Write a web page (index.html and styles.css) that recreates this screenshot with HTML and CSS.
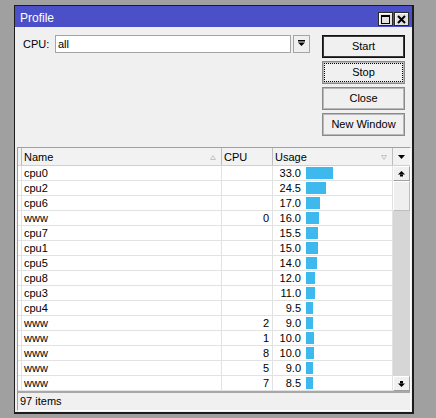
FILE: index.html
```html
<!DOCTYPE html>
<html>
<head>
<meta charset="utf-8">
<title>Profile</title>
<link rel="stylesheet" href="styles.css">
</head>
<body>
<div class="desktop">
  <div class="window">
    <div class="titlebar">
      <span class="title">Profile</span>
      <div class="tbtns">
        <span class="tbtn"><svg width="9" height="9" viewBox="0 0 9 9"><rect x="0.5" y="0.5" width="8" height="8" fill="none" stroke="#000"/><rect x="0" y="0" width="9" height="2" fill="#000"/></svg></span>
        <span class="tbtn"><svg width="9" height="9" viewBox="0 0 9 9"><path d="M1 1L8 8M8 1L1 8" stroke="#000" stroke-width="2"/></svg></span>
      </div>
    </div>
    <div class="body">
      <div class="top">
        <div class="form">
          <span class="label">CPU:</span>
          <div class="input">all</div>
          <div class="ddbtn"><svg width="7" height="6" viewBox="0 0 7 6"><rect x="0" y="0" width="7" height="1.5" fill="#000"/><polygon points="0,2.5 7,2.5 3.5,6" fill="#000"/></svg></div>
        </div>
        <div class="buttons">
          <div class="btn default">Start</div>
          <div class="btn focus"><span class="focusring">Stop</span></div>
          <div class="btn">Close</div>
          <div class="btn">New Window</div>
        </div>
      </div>
      <div class="frame">
        <div class="head">
          <div class="hcell"></div>
          <div class="hcell sort"><span>Name</span><svg width="6" height="5" viewBox="0 0 6 5"><polygon points="3,0.5 5.5,4.5 0.5,4.5" fill="none" stroke="#c4c4c4"/></svg></div>
          <div class="hcell"><span>CPU</span></div>
          <div class="hcell sort"><span>Usage</span><svg width="6" height="5" viewBox="0 0 6 5"><polygon points="0.5,0.5 5.5,0.5 3,4.5" fill="none" stroke="#c4c4c4"/></svg></div>
          <div class="hcell scrollhead"><svg width="7" height="4" viewBox="0 0 7 4"><polygon points="0,0 7,0 3.5,4" fill="#000"/></svg></div>
        </div>
        <div class="list">
          <div class="rows">
            <div class="row"><div class="c0"></div><div class="cname">cpu0</div><div class="ccpu"></div><div class="cuse"><span class="num">33.0</span><span class="bar" style="width:27px"></span></div></div>
            <div class="row"><div class="c0"></div><div class="cname">cpu2</div><div class="ccpu"></div><div class="cuse"><span class="num">24.5</span><span class="bar" style="width:20px"></span></div></div>
            <div class="row"><div class="c0"></div><div class="cname">cpu6</div><div class="ccpu"></div><div class="cuse"><span class="num">17.0</span><span class="bar" style="width:14px"></span></div></div>
            <div class="row"><div class="c0"></div><div class="cname">www</div><div class="ccpu">0</div><div class="cuse"><span class="num">16.0</span><span class="bar" style="width:13px"></span></div></div>
            <div class="row"><div class="c0"></div><div class="cname">cpu7</div><div class="ccpu"></div><div class="cuse"><span class="num">15.5</span><span class="bar" style="width:12px"></span></div></div>
            <div class="row"><div class="c0"></div><div class="cname">cpu1</div><div class="ccpu"></div><div class="cuse"><span class="num">15.0</span><span class="bar" style="width:12px"></span></div></div>
            <div class="row"><div class="c0"></div><div class="cname">cpu5</div><div class="ccpu"></div><div class="cuse"><span class="num">14.0</span><span class="bar" style="width:11px"></span></div></div>
            <div class="row"><div class="c0"></div><div class="cname">cpu8</div><div class="ccpu"></div><div class="cuse"><span class="num">12.0</span><span class="bar" style="width:9px"></span></div></div>
            <div class="row"><div class="c0"></div><div class="cname">cpu3</div><div class="ccpu"></div><div class="cuse"><span class="num">11.0</span><span class="bar" style="width:9px"></span></div></div>
            <div class="row"><div class="c0"></div><div class="cname">cpu4</div><div class="ccpu"></div><div class="cuse"><span class="num">9.5</span><span class="bar" style="width:7px"></span></div></div>
            <div class="row"><div class="c0"></div><div class="cname">www</div><div class="ccpu">2</div><div class="cuse"><span class="num">9.0</span><span class="bar" style="width:7px"></span></div></div>
            <div class="row"><div class="c0"></div><div class="cname">www</div><div class="ccpu">1</div><div class="cuse"><span class="num">10.0</span><span class="bar" style="width:8px"></span></div></div>
            <div class="row"><div class="c0"></div><div class="cname">www</div><div class="ccpu">8</div><div class="cuse"><span class="num">10.0</span><span class="bar" style="width:8px"></span></div></div>
            <div class="row"><div class="c0"></div><div class="cname">www</div><div class="ccpu">5</div><div class="cuse"><span class="num">9.0</span><span class="bar" style="width:7px"></span></div></div>
            <div class="row"><div class="c0"></div><div class="cname">www</div><div class="ccpu">7</div><div class="cuse"><span class="num">8.5</span><span class="bar" style="width:7px"></span></div></div>
          </div>
          <div class="vscroll">
            <div class="sbtn"><svg width="7" height="6" viewBox="0 0 7 6"><polygon points="3.5,0 7,3.5 0,3.5" fill="#000"/><rect x="2" y="3.5" width="3" height="2" fill="#000"/></svg></div>
            <div class="thumb"></div>
            <div class="track"></div>
            <div class="sbtn"><svg width="7" height="6" viewBox="0 0 7 6"><rect x="2" y="0" width="3" height="2.5" fill="#000"/><polygon points="0,2.5 7,2.5 3.5,6" fill="#000"/></svg></div>
          </div>
        </div>
        <div class="status">97 items</div>
      </div>
    </div>
  </div>
</div>
</body>
</html>
```

FILE: styles.css
```css
html, body {
  margin: 0;
  padding: 0;
}
body {
  background: #a0a0a0;
  font-family: "Liberation Sans", Arial, sans-serif;
  font-size: 11px;
  color: #000;
}
.desktop {
  padding: 5px 0 0 14px;
  height: 418px;
  box-sizing: border-box;
}
.window {
  width: 400px;
  height: 409px;
  box-sizing: border-box;
  border-style: solid;
  border-color: #1c1c1c;
  border-width: 1px 2px 2px 1px;
  background: #f0f0f0;
  display: flex;
  flex-direction: column;
}
.titlebar {
  height: 21px;
  flex: none;
  background: #4b50c8;
  display: flex;
  justify-content: space-between;
  align-items: flex-start;
  padding: 0 3px 0 5px;
  box-sizing: border-box;
}
.title {
  color: #fff;
  font-family: "Liberation Sans Narrow", "Liberation Sans", Arial, sans-serif;
  font-size: 12px;
  line-height: 17px;
  padding-top: 4px;
}
.tbtns {
  display: flex;
  gap: 1px;
  margin-top: 6px;
}
.tbtn {
  width: 15px;
  height: 14px;
  box-sizing: border-box;
  border: 1px solid #2a2a2a;
  background: #e2e2e2;
  box-shadow: inset 1px 1px 0 #fff;
  display: flex;
  align-items: center;
  justify-content: center;
}
.tbtn svg {
  display: block;
}
.body {
  flex: 1;
  padding: 8px 1px 1px 2px;
  display: flex;
  flex-direction: column;
}
.top {
  display: flex;
  align-items: flex-start;
  padding: 0 6px 0 6px;
  height: 101px;
  flex: none;
}
.form {
  display: flex;
  gap: 2px;
  flex: 1;
}
.label {
  width: 30px;
  height: 18px;
  line-height: 17px;
  padding-top: 1px;
  box-sizing: border-box;
}
.input {
  width: 236px;
  height: 18px;
  box-sizing: border-box;
  border: 1px solid #a5a5a5;
  background: #fff;
  padding: 1px 0 0 2px;
  line-height: 15px;
}
.ddbtn {
  width: 17px;
  height: 18px;
  box-sizing: border-box;
  border: 1px solid #a5a5a5;
  background: #f0f0f0;
  display: flex;
  align-items: center;
  justify-content: center;
}
.ddbtn svg {
  display: block;
  margin-top: -2px;
}
.buttons {
  width: 83px;
  margin-left: 12px;
  display: flex;
  flex-direction: column;
  gap: 3px;
}
.btn {
  height: 23px;
  box-sizing: border-box;
  border: 1px solid #8a8a8a;
  box-shadow: inset 0 0 0 1px #b9b9b9;
  background: #f0f0f0;
  display: flex;
  align-items: center;
  justify-content: center;
  line-height: 13px;
}
.btn.default {
  border-color: #111;
  box-shadow: inset 0 0 0 1px #3a3a3a;
}
.btn.focus {
  outline: 1px dotted #000;
  outline-offset: -3px;
}
.frame {
  margin-top: 11px;
  height: 264px;
  box-sizing: border-box;
  border-style: solid;
  border-width: 1px;
  border-color: #a0a0a0 #fff #fff #a0a0a0;
  display: flex;
  flex-direction: column;
}
.head {
  display: grid;
  grid-template-columns: 4px 200px 51px 120px 17px;
  height: 18px;
  box-sizing: border-box;
  border-bottom: 1px solid #cfcfcf;
  background: #f2f2f2;
}
.hcell {
  border-right: 1px solid #bdbdbd;
  padding: 2px 5px 0 2px;
  line-height: 15px;
  display: flex;
  align-items: flex-start;
  justify-content: space-between;
}
.hcell:first-child {
  padding: 0;
}
.hcell.sort svg {
  margin-top: 5px;
}
.hcell.scrollhead {
  border-right: none;
  padding: 0;
  justify-content: center;
  align-items: center;
}
.list {
  display: flex;
  border-bottom: 2px solid #a8a8a8;
}
.rows {
  width: 375px;
  background: #fff;
}
.row {
  display: grid;
  grid-template-columns: 4px 200px 51px 120px;
  height: 15px;
  box-sizing: border-box;
  border-bottom: 1px solid #e2e2e2;
}
.row > div {
  border-right: 1px solid #e2e2e2;
  line-height: 14px;
}
.cname {
  padding-left: 2px;
}
.ccpu {
  text-align: right;
  padding-right: 3px;
}
.cuse {
  display: flex;
  align-items: flex-start;
}
.num {
  width: 28px;
  text-align: right;
}
.bar {
  height: 12px;
  margin-top: 1px;
  margin-left: 5px;
  background: #3db9ed;
}
.vscroll {
  width: 17px;
  display: flex;
  flex-direction: column;
  background: #d6d6d6;
}
.sbtn {
  height: 15px;
  box-sizing: border-box;
  background: #f0f0f0;
  border: 1px solid;
  border-color: #fff #a0a0a0 #a0a0a0 #fff;
  display: flex;
  align-items: center;
  justify-content: center;
}
.thumb {
  height: 30px;
  box-sizing: border-box;
  background: #efefef;
  border: 1px solid;
  border-color: #fff #bdbdbd #bdbdbd #fff;
}
.track {
  flex: 1;
}
.status {
  flex: 1;
  padding-left: 2px;
  line-height: 17px;
}
```
